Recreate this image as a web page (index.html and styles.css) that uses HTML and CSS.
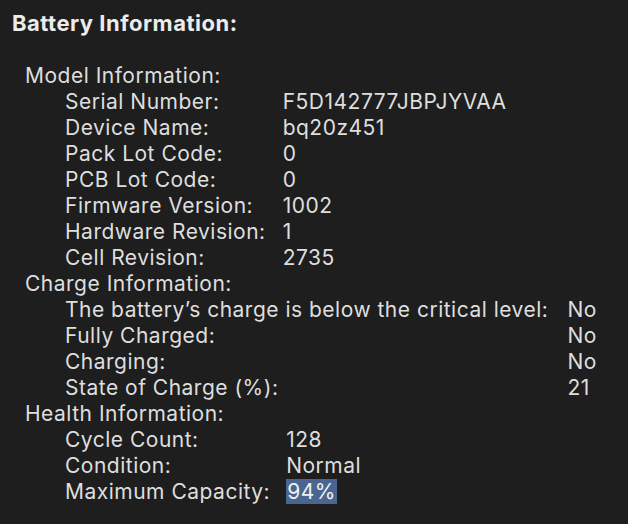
FILE: index.html
```html
<!DOCTYPE html>
<html>
<head>
<meta charset="utf-8">
<link rel="stylesheet" href="styles.css">
</head>
<body>
<div class="page">
  <div class="title">Battery Information:</div>
  <div class="body">
    <div class="section">Model Information:</div>
    <div class="grid model">
      <div>Serial Number:</div><div>F5D142777JBPJYVAA</div>
      <div>Device Name:</div><div>bq20z451</div>
      <div>Pack Lot Code:</div><div>0</div>
      <div>PCB Lot Code:</div><div>0</div>
      <div>Firmware Version:</div><div>1002</div>
      <div>Hardware Revision:</div><div>1</div>
      <div>Cell Revision:</div><div>2735</div>
    </div>
    <div class="section">Charge Information:</div>
    <div class="grid charge">
      <div>The battery’s charge is below the critical level:</div><div>No</div>
      <div>Fully Charged:</div><div>No</div>
      <div>Charging:</div><div>No</div>
      <div>State of Charge (%):</div><div>21</div>
    </div>
    <div class="section">Health Information:</div>
    <div class="grid health">
      <div>Cycle Count:</div><div>128</div>
      <div>Condition:</div><div>Normal</div>
      <div>Maximum Capacity:</div><div><span class="sel">94%</span></div>
    </div>
  </div>
</div>
</body>
</html>
```
FILE: styles.css
```css
html, body {
  margin: 0;
  padding: 0;
  background: #1e1e1e;
}
.page {
  width: 628px;
  height: 524px;
  box-sizing: border-box;
  padding: 10px 0 0 12px;
  font-family: Inter, "Noto Sans", sans-serif;
  color: #dedede;
  font-size: 21px;
  letter-spacing: 0.5px;
  line-height: 26px;
}
.title {
  font-weight: 700;
  color: #ececec;
  font-size: 22px;
  letter-spacing: 0.5px;
}
.body {
  margin-top: 27px;
  padding-left: 13px;
}
.grid {
  display: grid;
  grid-template-columns: max-content max-content;
  column-gap: 17px;
  padding-left: 40px;
}
.grid.charge {
  column-gap: 19px;
}
.grid.health {
  column-gap: 16px;
}
.sel {
  background: #4a6590;
  color: #f0f0f0;
  padding: 0 1px;
}
```
